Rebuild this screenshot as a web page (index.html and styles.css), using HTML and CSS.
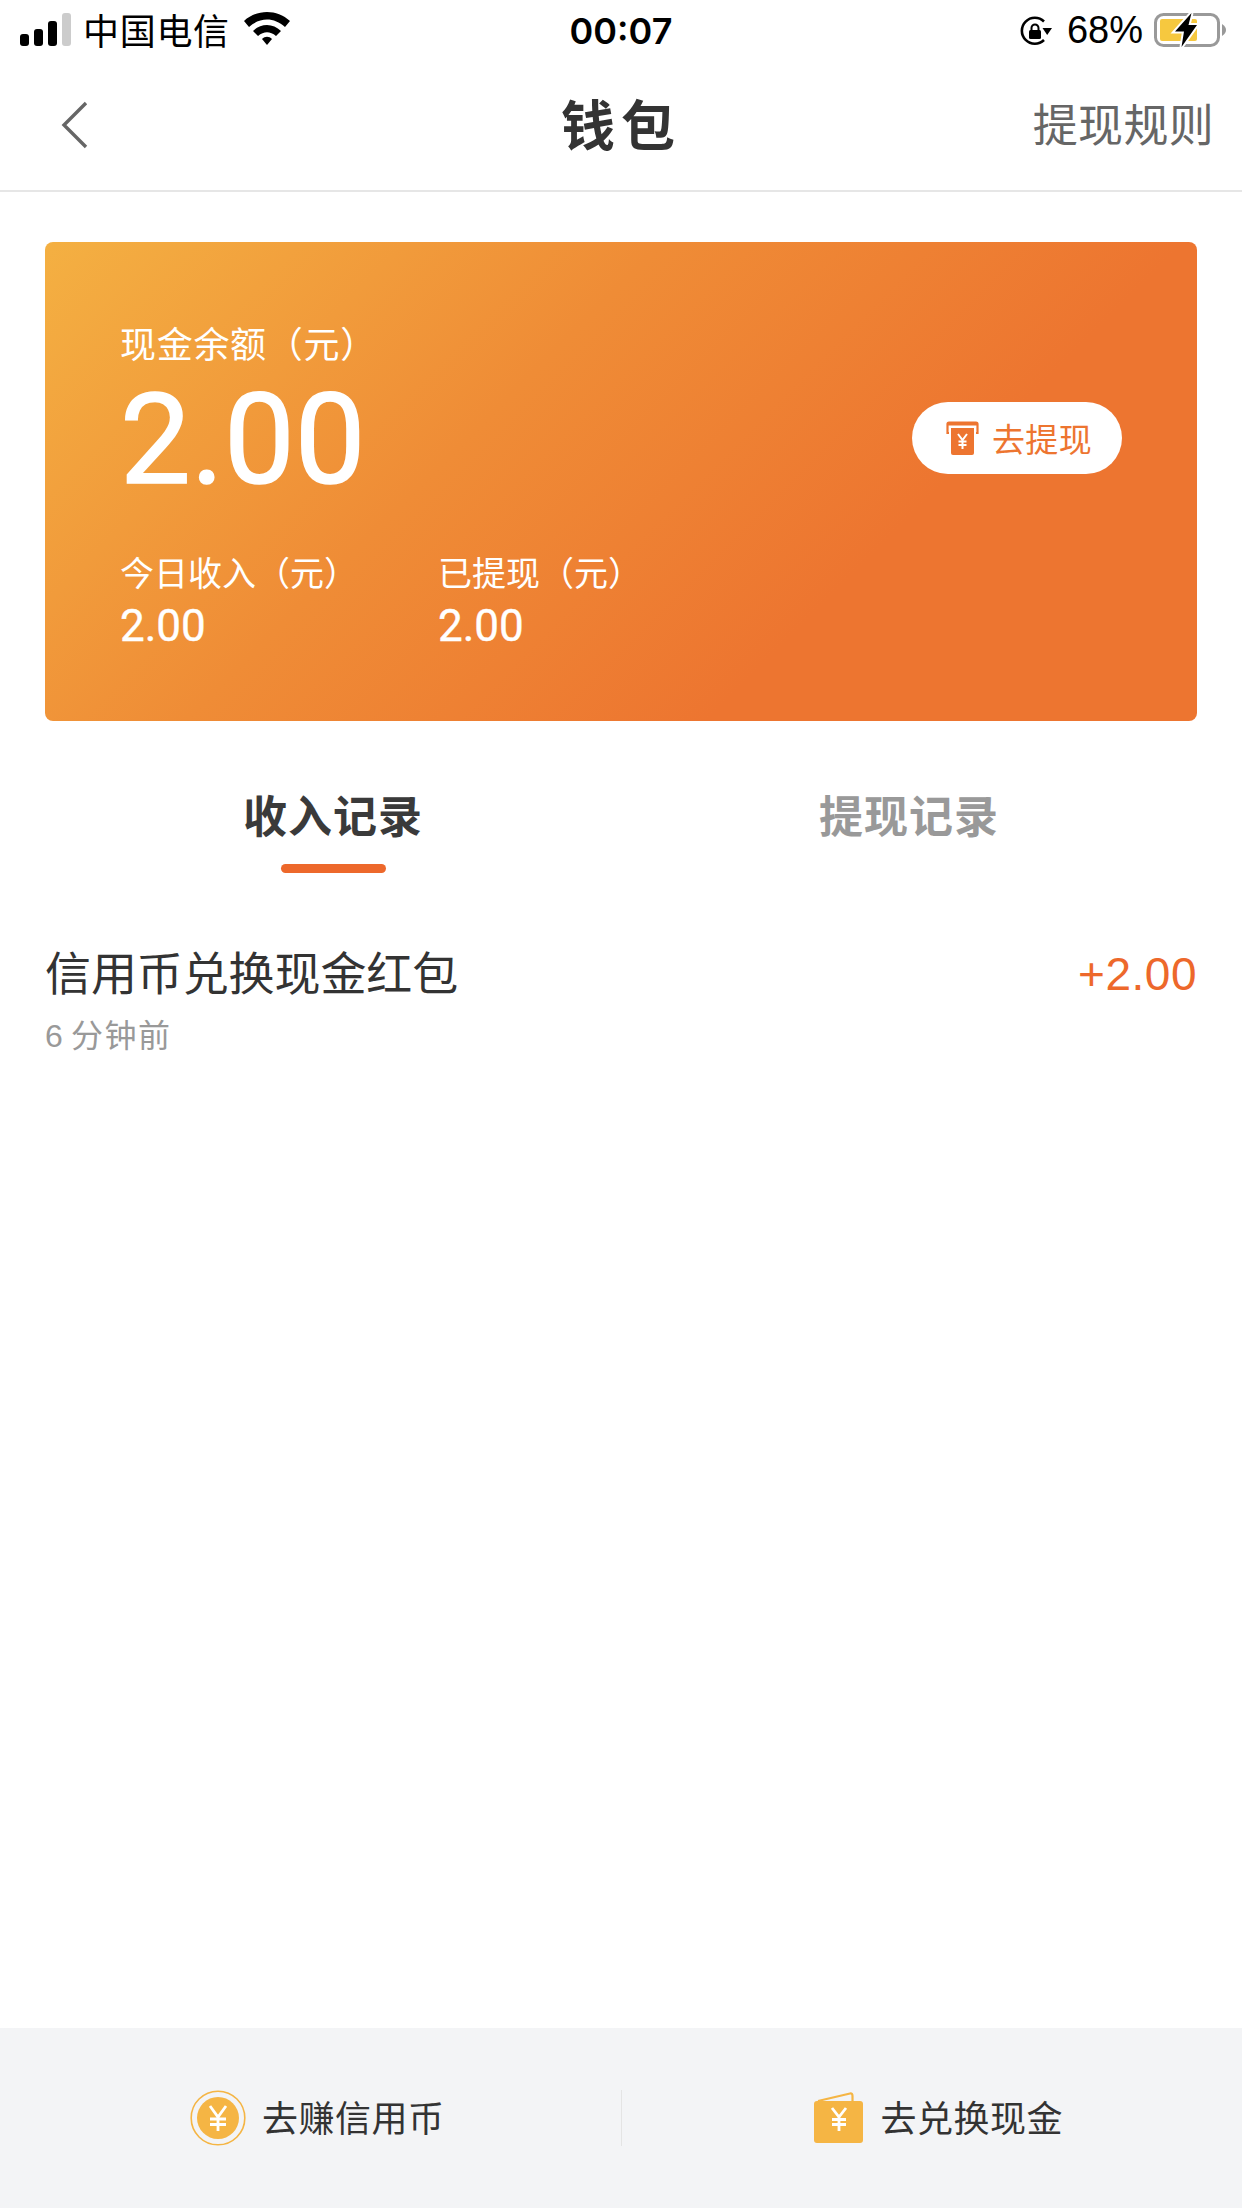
FILE: index.html
```html
<!DOCTYPE html>
<html lang="zh-CN">
<head>
	<meta charset="UTF-8">
	<title>钱包</title>
	<link rel="stylesheet" href="styles.css">
</head>
<body>
	<div class="page">
		<div class="status">
			<div class="status-left">
				<svg class="signal" width="52" height="34" viewBox="0 0 52 34">
					<rect x="0" y="21" width="9" height="12" rx="3" fill="#000"/>
					<rect x="14" y="16" width="9" height="17" rx="3" fill="#000"/>
					<rect x="28" y="8" width="9" height="25" rx="3" fill="#000"/>
					<rect x="42" y="0" width="9" height="33" rx="3" fill="#ccc"/>
				</svg>
				<span class="carrier">中国电信</span>
				<svg class="wifi" width="46" height="34" viewBox="0 0 46 34">
					<path d="M0 9 C13 -3 33 -3 46 9 L41 15 C30 5 16 5 5 15 Z" fill="#000"/>
					<path d="M9 19 C17 11 29 11 37 19 L32 24 C26 19 20 19 14 24 Z" fill="#000"/>
					<path d="M18 27 C21 24 25 24 28 27 L23 33 Z" fill="#000"/>
				</svg>
			</div>
			<div class="time">00:07</div>
			<div class="status-right">
				<svg class="lock" width="32" height="32" viewBox="0 0 32 32">
					<path d="M24 6.500 A13 13 0 1 0 24 25" fill="none" stroke="#000" stroke-width="2.6"/>
					<path d="M22.500 13 L32 13 L27.200 20 Z" fill="#000"/>
					<rect x="9" y="15" width="12" height="9" rx="1.500" fill="#000"/>
					<path d="M11.500 16 V13 A3.500 3.500 0 0 1 18.500 13 V16" fill="none" stroke="#000" stroke-width="2"/>
				</svg>
				<span class="percent">68%</span>
				<svg class="battery" width="74" height="36" viewBox="0 0 74 36">
					<rect x="1.500" y="2.500" width="63" height="31" rx="8" fill="none" stroke="#999" stroke-width="3"/>
					<rect x="6" y="7" width="37" height="22" rx="2" fill="#f6c83f"/>
					<path d="M68 12 C71 14 72 16 72 18 C72 20 71 22 68 24 Z" fill="#999"/>
					<path d="M37.500 1 L21 19.500 L30 19.500 L27.500 35 L43 13 L34.500 13 Z" fill="#000" stroke="#fff" stroke-width="4" paint-order="stroke"/>
				</svg>
			</div>
		</div>

		<div class="nav">
			<svg class="back" width="28" height="48" viewBox="0 0 28 48">
				<path d="M25 2 L3 24 L25 46" fill="none" stroke="#666" stroke-width="3.4"/>
			</svg>
			<h1 class="title">钱包</h1>
			<a class="rule">提现规则</a>
		</div>

		<div class="card">
			<div class="card-main">
				<div>
					<div class="label">现金余额（元）</div>
					<div class="balance">2.00</div>
				</div>
				<a class="withdraw">
					<svg width="33" height="34" viewBox="0 0 33 34">
						<path d="M3 12 H1.500 V3 Q1.500 1.500 3 1.500 H30 Q31.500 1.500 31.500 3 V12 H30" fill="none" stroke="#ed7530" stroke-width="2.2"/>
						<rect x="1.500" y="1.500" width="30" height="3" fill="#ed7530"/>
						<path d="M5 7 H28 V32 Q28 34 26 34 H7 Q5 34 5 32 Z" fill="#ed7530"/>
						<path d="M12 13 L16.500 19 L21 13 M16.500 19 V28 M12.500 20.500 H20.500 M12.500 24 H20.500" fill="none" stroke="#fff" stroke-width="2"/>
					</svg>
					<span>去提现</span>
				</a>
			</div>
			<div class="card-stats">
				<div class="stat">
					<div class="stat-label">今日收入（元）</div>
					<div class="stat-num">2.00</div>
				</div>
				<div class="stat">
					<div class="stat-label">已提现（元）</div>
					<div class="stat-num">2.00</div>
				</div>
			</div>
		</div>

		<div class="tabs">
			<div class="tab tab-on">收入记录</div>
			<div class="tab">提现记录</div>
		</div>

		<div class="record">
			<div>
				<div class="record-name">信用币兑换现金红包</div>
				<div class="record-time">6 分钟前</div>
			</div>
			<div class="record-amount">+2.00</div>
		</div>

		<div class="bottom">
			<a class="bottom-item">
				<svg width="56" height="56" viewBox="0 0 56 56">
					<circle cx="28" cy="28" r="26.800" fill="none" stroke="#f5b544" stroke-width="1.600"/>
					<circle cx="28" cy="28" r="21" fill="#f5b544"/>
					<path d="M20 16 L28 27 L36 16 M28 27 V41 M20 29 H36 M20 34.500 H36" fill="none" stroke="#fff" stroke-width="2.8"/>
				</svg>
				<span>去赚信用币</span>
			</a>
			<a class="bottom-item">
				<svg width="50" height="52" viewBox="0 0 50 52">
					<path d="M4 9 L36 1.500 Q38.500 1 38.500 4 V10" fill="none" stroke="#f5b544" stroke-width="2.2"/>
					<rect x="0" y="9" width="49" height="42" rx="3" fill="#f5b544"/>
					<path d="M18 16 L25 25 L32 16 M25 25 V39 M18 27.500 H32 M18 32.500 H32" fill="none" stroke="#fff" stroke-width="2.8"/>
				</svg>
				<span>去兑换现金</span>
			</a>
		</div>
	</div>
</body>
</html>
```

FILE: styles.css
```css
*{
	margin:0;
	padding:0;
	box-sizing:border-box;
}
body{
	width:1242px;
	height:2208px;
	overflow:hidden;
	background:#fff;
	font-family:"Liberation Sans","Noto Sans CJK SC",sans-serif;
}
.page{
	height:2208px;
	display:flex;
	flex-direction:column;
}

/* status bar */
.status{
	height:60px;
	display:flex;
	align-items:center;
	justify-content:space-between;
	padding:0 14px 0 20px;
	position:relative;
	color:#000;
}
.status-left,.status-right{
	display:flex;
	align-items:center;
}
.carrier{
	font-size:36px;
	letter-spacing:.7px;
	margin:-3px 0 0 11px;
}
.wifi{
	margin-left:14px;
	margin-top:-2px;
}
.time{
	position:absolute;
	left:0;
	right:0;
	text-align:center;
	font-family:Inter,sans-serif;
	font-size:36px;
	font-weight:600;
	margin-top:2px;
}
.percent{
	font-size:38px;
	margin:0 11px 0 15px;
}
.lock{
	margin-top:2px;
}

/* nav */
.nav{
	height:132px;
	display:flex;
	align-items:center;
	justify-content:space-between;
	padding:0 28px 0 61px;
	border-bottom:2px solid #e6e6e6;
	position:relative;
}
.title{
	position:absolute;
	left:0;
	right:0;
	text-align:center;
	font-size:54px;
	font-weight:bold;
	letter-spacing:6px;
	color:#333;
	margin-bottom:5px;
}
.rule{
	font-size:45px;
	letter-spacing:.3px;
	color:#666;
	margin-bottom:5px;
}

/* card */
.card{
	width:1152px;
	height:479px;
	margin:50px 0 0 45px;
	padding:79px 75px 0 75px;
	border-radius:8px;
	color:#fff;
	background:linear-gradient(135deg,#f4b042 0%,#ef8c36 38%,#ed7530 70%,#ed7530 100%);
}
.card-main{
	display:flex;
	align-items:center;
	justify-content:space-between;
}
.label{
	font-size:36px;
	line-height:50px;
	letter-spacing:.7px;
}
.balance{
	font-family:Roboto,sans-serif;
	font-size:126px;
	line-height:126px;
	margin-top:6px;
	-webkit-text-stroke:1.5px #fff;
}
.withdraw{
	width:210px;
	height:72px;
	margin-top:51px;
	padding-left:4px;
	border-radius:36px;
	background:#fff;
	color:#ed7530;
	font-size:33px;
	letter-spacing:.3px;
	display:flex;
	align-items:center;
	justify-content:center;
	gap:13px;
}
.card-stats{
	display:flex;
	margin-top:47px;
}
.stat{
	width:318px;
}
.stat-label{
	font-size:34px;
	line-height:48px;
}
.stat-num{
	font-family:Roboto,sans-serif;
	font-size:44px;
	line-height:56px;
	-webkit-text-stroke:.4px #fff;
}

/* tabs */
.tabs{
	display:flex;
	justify-content:center;
	margin-top:64px;
}
.tab{
	width:576px;
	height:88px;
	text-align:center;
	font-size:44px;
	font-weight:bold;
	line-height:66px;
	letter-spacing:1px;
	color:#999;
	position:relative;
}
.tab-on{
	color:#3a3a3a;
}
.tab-on::after{
	content:"";
	position:absolute;
	left:236px;
	bottom:0;
	width:105px;
	height:9px;
	border-radius:5px;
	background:#ed682b;
}

/* list */
.record{
	display:flex;
	justify-content:space-between;
	margin-top:71px;
	padding:0 45px;
}
.record-name{
	font-size:46px;
	line-height:60px;
	color:#333;
	letter-spacing:-.1px;
}
.record-time{
	font-size:32px;
	line-height:50px;
	margin-top:7px;
	color:#999;
	letter-spacing:1.6px;
	word-spacing:-4px;
}
.record-amount{
	font-size:46px;
	line-height:60px;
	color:#ed682b;
	letter-spacing:.5px;
}

/* bottom bar */
.bottom{
	margin-top:auto;
	height:180px;
	background:#f3f4f6;
	display:flex;
	align-items:center;
}
.bottom-item{
	flex:1;
	height:56px;
	padding-left:14px;
	display:flex;
	align-items:center;
	justify-content:center;
	gap:16px;
	font-size:36px;
	color:#333;
	letter-spacing:.5px;
}
.bottom-item span{
	margin-top:-5px;
}
.bottom-item:first-child{
	border-right:1px solid #e4e4e4;
}
```
